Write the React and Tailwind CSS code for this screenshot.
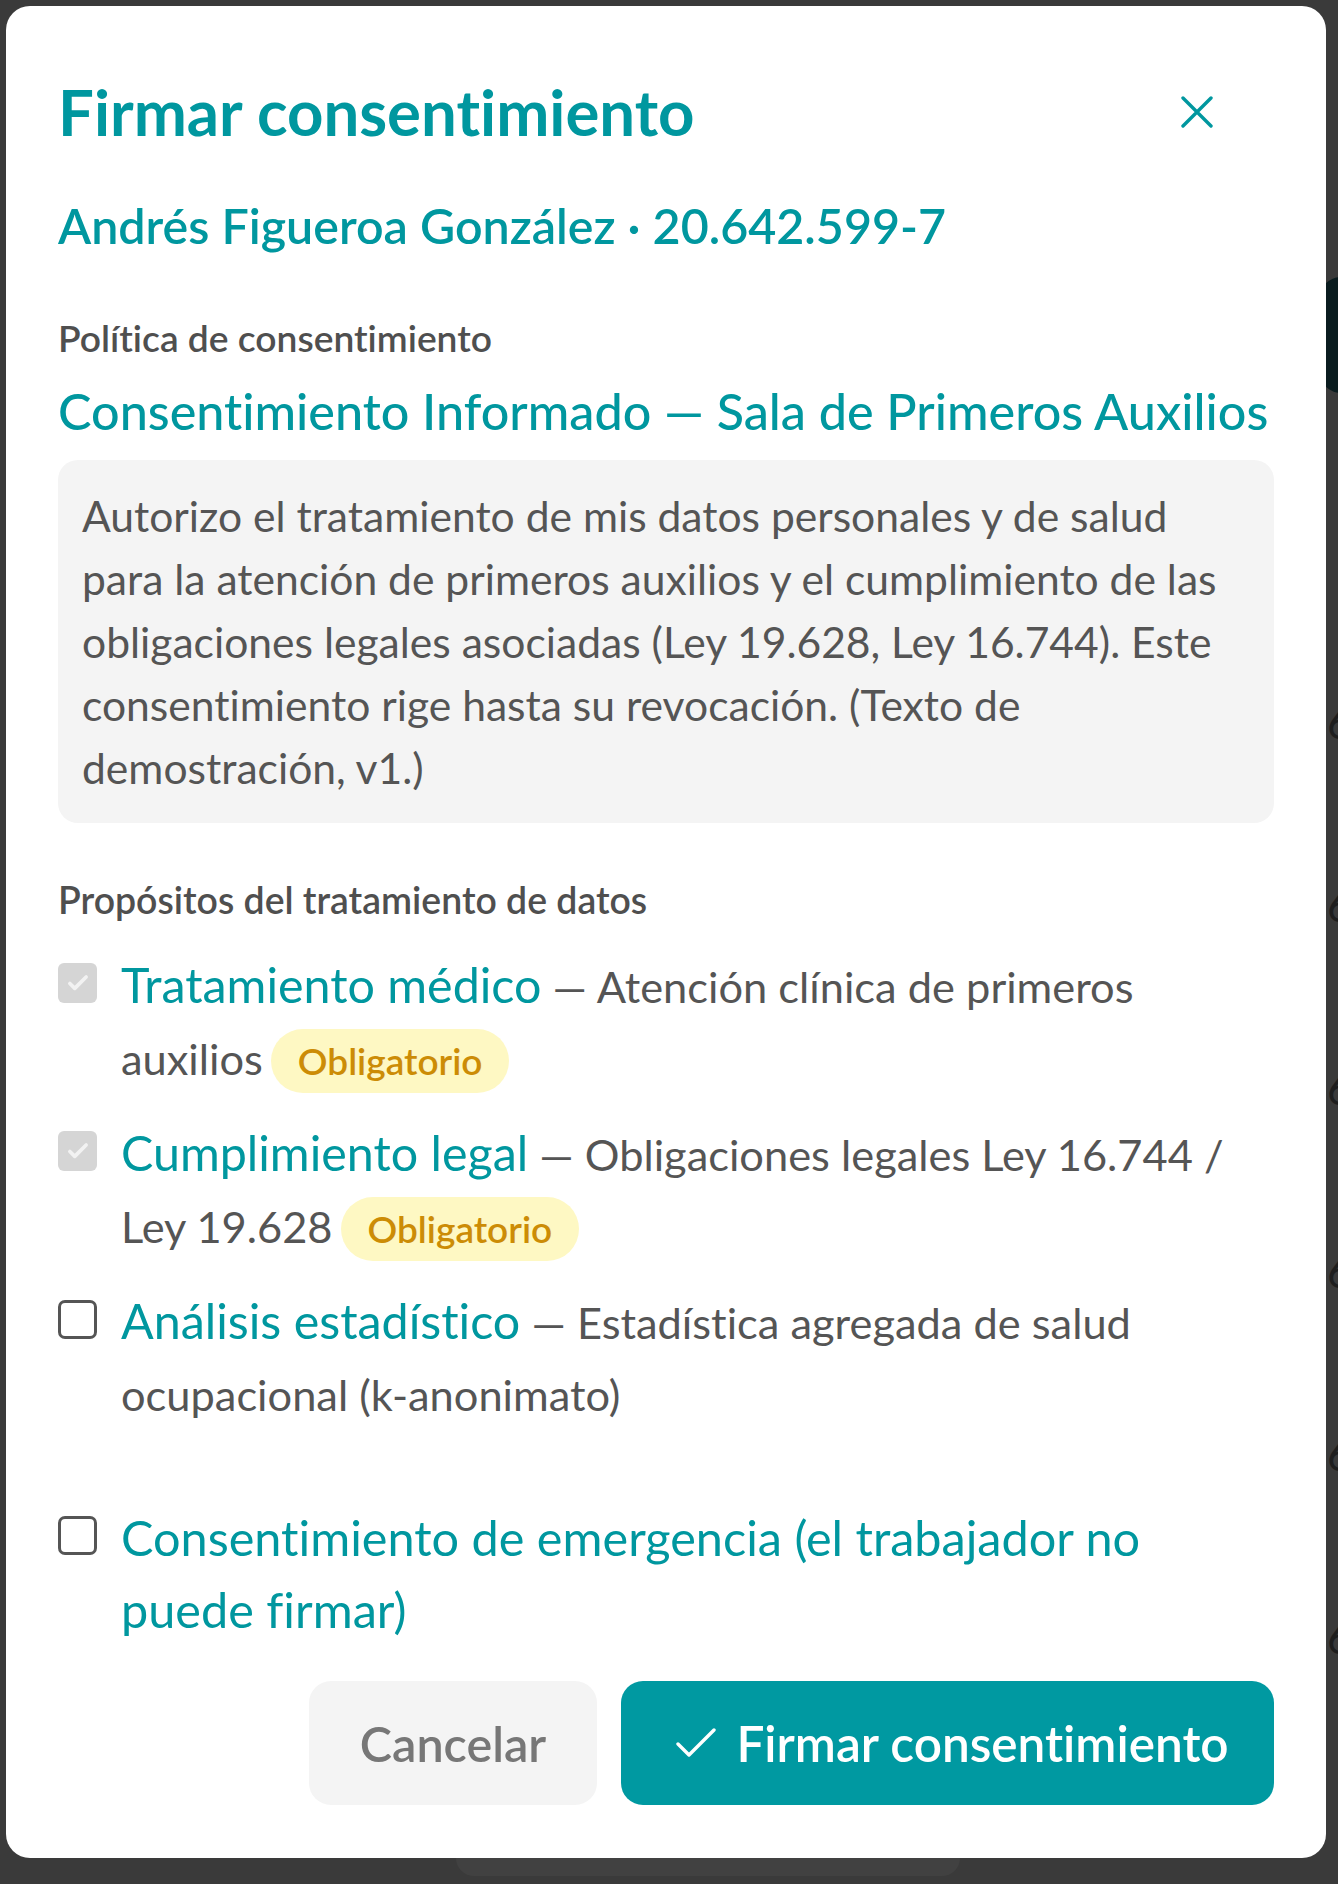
import React from "react";

const TEAL = "text-[#00979f]";

const CheckBox = ({ checked }) => {
  if (checked) {
    return (
      <span className="mt-[14px] flex h-[40px] w-[39px] shrink-0 items-center justify-center rounded-[6px] bg-[#d5d5d5]">
        <svg width="26" height="26" viewBox="0 0 24 24" fill="none">
          <path
            d="M4.5 12.5l4.5 4.5L19.5 6.5"
            stroke="#f2f2f2"
            strokeWidth="3.4"
            strokeLinecap="round"
            strokeLinejoin="round"
          />
        </svg>
      </span>
    );
  }
  return (
    <span className="mt-[15px] block h-[39px] w-[39px] shrink-0 rounded-[7px] border-[3px] border-[#555555] bg-white" />
  );
};

const Badge = () => (
  <span className="ml-[8px] inline-flex h-[64px] items-center rounded-full bg-[#fef8c3] px-[27px] text-[37px] font-semibold text-[#cc8c06]">
    Obligatorio
  </span>
);

const Purpose = ({ title, desc, required, checked }) => (
  <div className="flex items-start gap-[24px]">
    <CheckBox checked={checked} />
    <div className="flex-1 pr-[44px] text-[48px] leading-[72px]">
      <span className={`${TEAL} text-[48.4px] leading-none`}>{title}</span>
      <span className="text-[43.4px] leading-none text-[#555555]"> — {desc}</span>
      {required && <Badge />}
    </div>
  </div>
);

const CloseIcon = () => (
  <svg width="32" height="32" viewBox="0 0 32 32" fill="none">
    <path d="M2 2L30 30M30 2L2 30" stroke="#00979f" strokeWidth="3.4" strokeLinecap="round" />
  </svg>
);

const CheckIcon = () => (
  <svg width="40" height="30" viewBox="0 0 40 30" fill="none">
    <path d="M2 16L13 27L38 2" stroke="white" strokeWidth="3.4" strokeLinecap="round" strokeLinejoin="round" />
  </svg>
);

export default function App() {
  return (
    <div className="relative h-[1884px] w-full overflow-hidden bg-[#3a3a3a] font-['Lato',sans-serif] [font-variant-ligatures:none]">
      {/* page behind the overlay */}
      <div className="absolute left-[1318px] top-[277px] h-[116px] w-[60px] rounded-[24px] bg-[#0a1c1f]" />
      <div className="absolute left-[456px] top-[1840px] h-[36px] w-[504px] rounded-[22px] bg-[#414141]" />
      <div className="absolute left-[1327px] top-[700px] flex flex-col gap-[139px] text-[44px] leading-none text-[#1e1e1e]">
        <span>6</span>
        <span>6</span>
        <span>6</span>
        <span>6</span>
        <span>6</span>
        <span>6</span>
      </div>

      {/* modal */}
      <div className="absolute left-[6px] top-[6px] w-[1320px] rounded-[24px] bg-white px-[52px] pb-[53px] pt-[69px]">
        <div className="flex items-center justify-between">
          <h2 className={`${TEAL} text-[63.5px] font-bold leading-[74px]`}>Firmar consentimiento</h2>
          <button className="mr-[45px] flex h-16 w-16 items-center justify-center">
            <CloseIcon />
          </button>
        </div>

        <p className={`${TEAL} mt-[47px] text-[48.4px] font-semibold leading-[58px]`}>
          Andrés Figueroa González · 20.642.599-7
        </p>

        <p className="mt-[62px] text-[37.2px] font-semibold leading-[44px] text-[#4f4f4f]">
          Política de consentimiento
        </p>
        <p className={`${TEAL} mt-[21px] text-[50.3px] font-medium leading-[60px]`}>
          Consentimiento Informado — Sala de Primeros Auxilios
        </p>

        <div className="mt-[19px] rounded-[20px] bg-[#f4f4f4] p-[24px] text-[42.6px] leading-[63px] text-[#555555]">
          Autorizo el tratamiento de mis datos personales y de salud para la atención de primeros auxilios y el
          cumplimiento de las obligaciones legales asociadas (Ley 19.628, Ley 16.744). Este consentimiento rige hasta
          su revocación. (Texto de demostración, v1.)
        </div>

        <p className="mt-[55px] text-[37.4px] font-semibold leading-[44px] text-[#4f4f4f]">
          Propósitos del tratamiento de datos
        </p>

        <div className="mt-[27px] flex flex-col gap-[24px]">
          <Purpose title="Tratamiento médico" desc="Atención clínica de primeros auxilios" required checked />
          <Purpose title="Cumplimiento legal" desc="Obligaciones legales Ley 16.744 / Ley 19.628" required checked />
          <Purpose title="Análisis estadístico" desc="Estadística agregada de salud ocupacional (k-anonimato)" />
        </div>

        <div className="mt-[72px] flex items-start gap-[24px]">
          <CheckBox />
          <div className={`${TEAL} flex-1 pr-[44px] text-[48.6px] leading-[72px]`}>
            Consentimiento de emergencia (el trabajador no puede firmar)
          </div>
        </div>

        <div className="mt-[36px] flex justify-end gap-[24px]">
          <button className="flex h-[124px] w-[288px] items-center justify-center rounded-[22px] bg-[#f4f4f4] text-[48.5px] font-semibold text-[#777777]">
            Cancelar
          </button>
          <button className="flex h-[124px] w-[653px] items-center justify-center gap-[20px] rounded-[22px] bg-[#0099a1] pl-[10px] text-[49.5px] font-semibold text-white">
            <CheckIcon />
            Firmar consentimiento
          </button>
        </div>
      </div>
    </div>
  );
}
